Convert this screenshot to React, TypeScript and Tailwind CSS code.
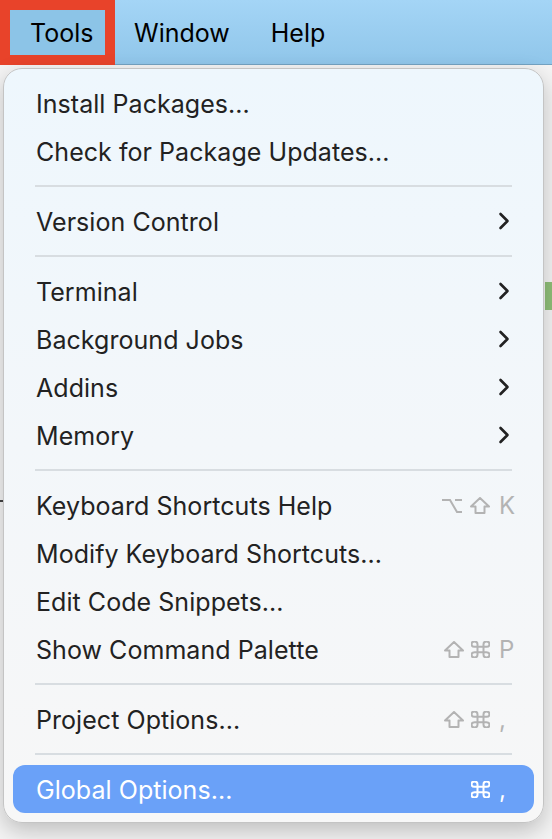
import React from 'react';

const font = { fontFamily: 'Inter, "Noto Sans", sans-serif' };

const Shift = () => (
  <svg width="20" height="17" viewBox="0 0 20 17" fill="none" stroke="currentColor" strokeWidth="2" strokeLinejoin="round">
    <polygon points="10,1 19,9.5 14.5,9.5 14.5,16 5.5,16 5.5,9.5 1,9.5" />
  </svg>
);

const Cmd = () => (
  <svg width="19" height="17" viewBox="2.5 2.5 19 19" preserveAspectRatio="none" fill="none" stroke="currentColor" strokeWidth="2">
    <path vectorEffect="non-scaling-stroke" d="M15 6v12a3 3 0 1 0 3-3H6a3 3 0 1 0 3 3V6a3 3 0 1 0-3 3h12a3 3 0 1 0-3-3" />
  </svg>
);

const Opt = () => (
  <svg width="22" height="16" viewBox="0 0 22 16" fill="none" stroke="currentColor" strokeWidth="2">
    <path d="M1 2H9L16 14H21M14 2H21" />
  </svg>
);

const Chevron = () => (
  <svg width="12" height="18" viewBox="0 0 12 18" fill="none" stroke="currentColor" strokeWidth="2.6" strokeLinecap="round" strokeLinejoin="round">
    <path d="M2.5 2L9.5 9L2.5 16" />
  </svg>
);

type Mod = 'opt' | 'shift' | 'cmd';
type Item = { label: string; sub?: boolean; mods?: Mod[]; key?: string; active?: boolean };

const groups: Item[][] = [
  [{ label: 'Install Packages...' }, { label: 'Check for Package Updates...' }],
  [{ label: 'Version Control', sub: true }],
  [
    { label: 'Terminal', sub: true },
    { label: 'Background Jobs', sub: true },
    { label: 'Addins', sub: true },
    { label: 'Memory', sub: true },
  ],
  [
    { label: 'Keyboard Shortcuts Help', mods: ['opt', 'shift'], key: 'K' },
    { label: 'Modify Keyboard Shortcuts...' },
    { label: 'Edit Code Snippets...' },
    { label: 'Show Command Palette', mods: ['shift', 'cmd'], key: 'P' },
  ],
  [{ label: 'Project Options...', mods: ['shift', 'cmd'], key: ',' }],
  [{ label: 'Global Options...', mods: ['cmd'], key: ',', active: true }],
];

const ModIcon = ({ m }: { m: Mod }) => (m === 'opt' ? <Opt /> : m === 'shift' ? <Shift /> : <Cmd />);

const Row = ({ item }: { item: Item }) => (
  <div
    className={`h-12 flex items-center justify-between pl-[23px] rounded-[12px] ${
      item.active ? 'bg-[#6aa1f8] text-white' : 'text-[#222]'
    } ${item.sub ? 'pr-[24px]' : 'pr-[6px]'}`}
  >
    <span className="text-[25px] tracking-[0.05px] pt-[3px]">{item.label}</span>
    {item.sub && <Chevron />}
    {item.key && (
      <span className={`flex items-center pt-[1px] ${item.active ? 'text-white' : 'text-[#b3b3b3]'}`}>
        <span className="flex items-center justify-end gap-[7px]">
          {item.mods?.map((m, i) => <ModIcon key={i} m={m} />)}
        </span>
        <span className="w-[29px] ml-[9px] text-[24px] leading-none">{item.key}</span>
      </span>
    )}
  </div>
);

export default function App() {
  return (
    <div className="relative w-[552px] h-[839px] overflow-hidden bg-[#f4f4f4]" style={font}>
      <div className="h-[65px] flex items-center bg-gradient-to-b from-[#a4d5f6] to-[#90c6ea] border-b border-[#74a3c2]">
        <div className="h-[65px] w-[115px] border-[10px] border-[#e8432a] bg-[#8cc4e7] flex items-center pl-[20px] pt-[3px]">
          <span className="text-[25px] text-black">Tools</span>
        </div>
        <span className="text-[25px] text-black ml-[19px] pt-[3px]">Window</span>
        <span className="text-[25px] text-black ml-[41px] pt-[3px]">Help</span>
      </div>

      <div className="absolute right-0 top-[282px] w-[7px] h-[28px] bg-[#8fbf78]" />
      <div className="absolute left-0 top-[500px] w-[3px] h-[2px] bg-[#444]" />

      <div className="absolute left-[3px] top-[68px] w-[541px] rounded-[19px] border border-[#c4c4c4] bg-gradient-to-b from-[#eef7fd] via-[#f3f7fa] to-[#f7f7f7] shadow-[0_8px_22px_rgba(0,0,0,0.22)] px-[9px] pt-[10px] pb-[9px]">
        {groups.map((g, gi) => (
          <div key={gi}>
            {gi > 0 && (
              <div className="h-[22px] flex items-center px-[22px]">
                <div className="h-[2px] w-full bg-[#d8dde1]" />
              </div>
            )}
            {g.map((item) => (
              <Row key={item.label} item={item} />
            ))}
          </div>
        ))}
      </div>
    </div>
  );
}
